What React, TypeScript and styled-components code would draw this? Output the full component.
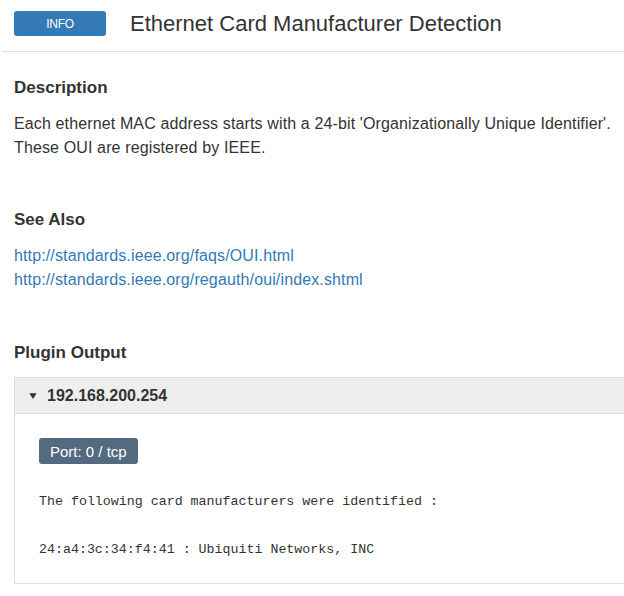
import React from "react";
import styled, { createGlobalStyle } from "styled-components";

const Global = createGlobalStyle`
  html, body { margin: 0; padding: 0; background: #fff; }
  body {
    font-family: "Liberation Sans", Arial, Helvetica, sans-serif;
    color: #333;
    overflow-x: hidden;
  }
`;

const Page = styled.div`
  width: 624px;
  display: flex;
  flex-direction: column;
`;

const Header = styled.header`
  display: flex;
  align-items: flex-start;
  gap: 24px;
  margin-left: 2px;
  padding: 11px 0 0 12px;
  height: 40px;
  border-bottom: 1px solid #ddd;
`;

const SeverityBadge = styled.span`
  display: flex;
  align-items: center;
  justify-content: center;
  width: 92px;
  height: 25px;
  border-radius: 3px;
  background: #337ab7;
  color: #fff;
  font-size: 12px;
  letter-spacing: -0.3px;
`;

const Title = styled.h1`
  margin: 0;
  font-size: 22px;
  font-weight: normal;
  line-height: 25px;
  color: #333;
`;

const Content = styled.main`
  display: flex;
  flex-direction: column;
  padding: 0 0 0 14px;
`;

const Section = styled.section<{ $top: number }>`
  display: flex;
  flex-direction: column;
  margin-top: ${(p) => p.$top}px;
`;

const SectionTitle = styled.h3`
  margin: 0 0 14px;
  font-size: 17px;
  font-weight: bold;
  line-height: 20px;
  color: #333;
`;

const Paragraph = styled.p`
  margin: 0;
  font-size: 16px;
  line-height: 24px;
  letter-spacing: 0.13px;
`;

const LinkList = styled.div`
  display: flex;
  flex-direction: column;
`;

const Link = styled.a`
  color: #337ab7;
  font-size: 16px;
  line-height: 23.5px;
  letter-spacing: 0.13px;
  text-decoration: none;
`;

const OutputBox = styled.div`
  margin-right: -30px;
  border: 1px solid #ddd;
  display: flex;
  flex-direction: column;
`;

const HostHeader = styled.div`
  display: flex;
  align-items: center;
  gap: 10px;
  height: 35px;
  padding-left: 14px;
  background: #eee;
  border-bottom: 1px solid #ddd;
  font-size: 16px;
  font-weight: bold;
  color: #333;
`;

const HostBody = styled.div`
  display: flex;
  flex-direction: column;
  align-items: flex-start;
  padding: 24px 24px 21px;
`;

const PortBadge = styled.span`
  display: inline-flex;
  align-items: center;
  height: 26px;
  padding: 0 11px;
  border-radius: 3px;
  background: #536a80;
  color: #fff;
  font-size: 15px;
`;

const Pre = styled.pre`
  margin: 26px 0 0;
  font-family: "Liberation Mono", "Courier New", monospace;
  font-size: 13.3px;
  line-height: 24px;
  color: #333;
  white-space: pre;
`;

const Caret = () => (
  <svg width="8" height="6" viewBox="0 0 8 6" aria-hidden="true">
    <path d="M0.3 0.3 L7.7 0.3 L4 6 Z" fill="#333" />
  </svg>
);

export default function App() {
  return (
    <Page>
      <Global />
      <Header>
        <SeverityBadge>INFO</SeverityBadge>
        <Title>Ethernet Card Manufacturer Detection</Title>
      </Header>
      <Content>
        <Section $top={26}>
          <SectionTitle>Description</SectionTitle>
          <Paragraph>
            Each ethernet MAC address starts with a 24-bit 'Organizationally Unique Identifier'.
            <br />
            These OUI are registered by IEEE.
          </Paragraph>
        </Section>
        <Section $top={50}>
          <SectionTitle>See Also</SectionTitle>
          <LinkList>
            <Link href="#">http://standards.ieee.org/faqs/OUI.html</Link>
            <Link href="#">http://standards.ieee.org/regauth/oui/index.shtml</Link>
          </LinkList>
        </Section>
        <Section $top={52}>
          <SectionTitle>Plugin Output</SectionTitle>
          <OutputBox>
            <HostHeader>
              <Caret />
              <span>192.168.200.254</span>
            </HostHeader>
            <HostBody>
              <PortBadge>Port: 0 / tcp</PortBadge>
              <Pre>{"The following card manufacturers were identified :\n\n24:a4:3c:34:f4:41 : Ubiquiti Networks, INC"}</Pre>
            </HostBody>
          </OutputBox>
        </Section>
      </Content>
    </Page>
  );
}
